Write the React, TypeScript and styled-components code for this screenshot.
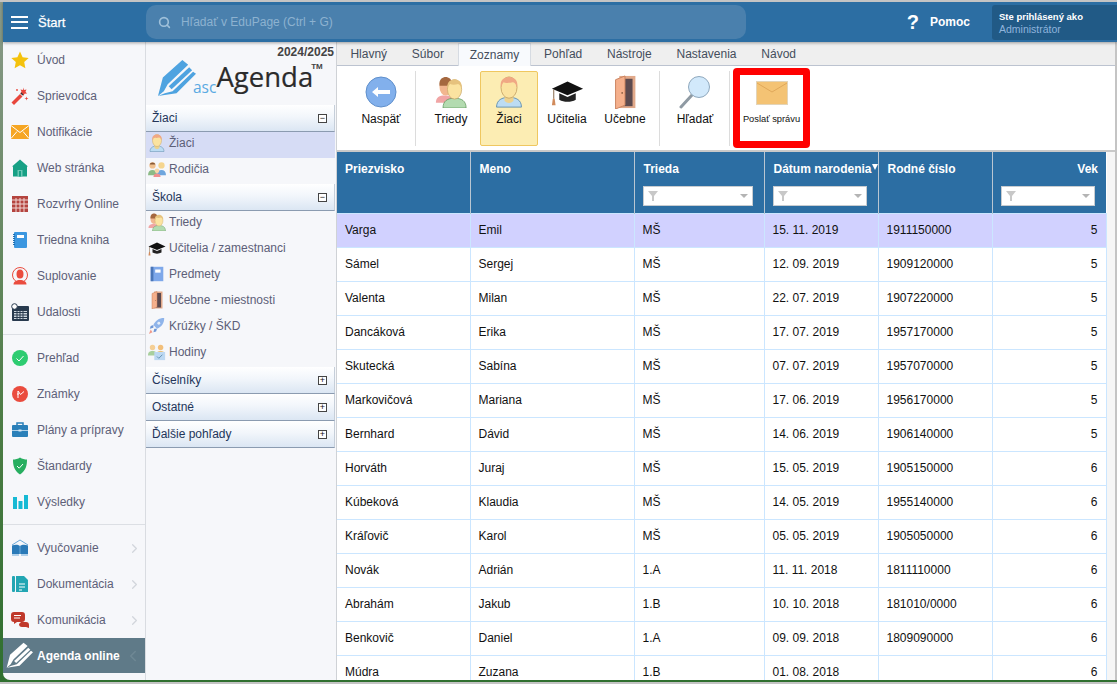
import React from "react";
import styled, { createGlobalStyle } from "styled-components";
import { ChevronLeft, ChevronRight, Search } from "lucide-react";

const GlobalStyle = createGlobalStyle`
  html, body { margin: 0; padding: 0; height: 100%; overflow: hidden; }
  body { font-family: "Liberation Sans", Arial, sans-serif; font-size: 12px; }
  * { box-sizing: border-box; }
`;

const Frame = styled.div`
  width: 1117px;
  height: 684px;
  display: flex;
  flex-direction: column;
  overflow: hidden;
  border-top: 2px solid #c4c4c4;
  border-bottom: 2px solid #c4c4c4;
  padding: 0 0 2px 3px;
  background: linear-gradient(180deg, #8a9a8a 0%, #4e7d46 60%, #2f6f2f 100%);
`;
const TopBar = styled.header`
  height: 40px;
  flex: none;
  display: flex;
  align-items: center;
  background: #2c6ea3;
  color: #fff;
  box-shadow: 0 1px 3px rgba(0, 0, 0, 0.35);
  position: relative;
  z-index: 2;
`;
const StartArea = styled.div`
  width: 143px;
  flex: none;
  display: flex;
  align-items: center;
  padding-left: 8px;
  gap: 10px;
`;
const Burger = styled.div`
  width: 17px;
  height: 13px;
  display: flex;
  flex-direction: column;
  justify-content: space-between;
  & > span { height: 2px; background: #fff; display: block; }
`;
const StartLabel = styled.span`
  font-size: 13px;
  -webkit-text-stroke: 0.25px #fff;
`;
const SearchBox = styled.div`
  width: 600px;
  height: 34px;
  flex: none;
  border-radius: 10px;
  background: #4a80ad;
  color: #8db2d0;
  display: flex;
  align-items: center;
  padding-left: 12px;
  gap: 10px;
  font-size: 12px;
`;
const HelpArea = styled.div`
  margin-left: auto;
  display: flex;
  align-items: center;
  margin-right: 22px;
  gap: 11px;
  font-weight: 700;
`;
const HelpMark = styled.span`
  font-size: 20px;
  font-weight: 700;
`;
const UserBox = styled.div`
  width: 125px;
  height: 35px;
  flex: none;
  background: #215a86;
  border-radius: 3px 0 0 3px;
  padding: 5px 0 0 7px;
  line-height: 13px;
`;
const UserTop = styled.div`
  font-size: 9.5px;
  font-weight: 700;
  color: #fff;
`;
const UserName = styled.div`
  font-size: 10.5px;
  color: #8fb4dc;
`;
const Body = styled.div`
  flex: 1;
  min-height: 0;
  display: flex;
`;
const SideMenu = styled.nav`
  width: 143px;
  flex: none;
  background: #f6f7fa;
  border-right: 1px solid #d9dce1;
  border-bottom-left-radius: 7px;
  display: flex;
  flex-direction: column;
`;
const MenuItem = styled.div<{ $active?: boolean }>`
  height: ${(p) => (p.$active ? "35px" : "36px")};
  flex: none;
  display: flex;
  align-items: center;
  padding-left: ${(p) => (p.$active ? "3px" : "8px")};
  gap: ${(p) => (p.$active ? "4px" : "8px")};
  white-space: nowrap;
  color: ${(p) => (p.$active ? "#fff" : "#5d6078")};
  background: ${(p) => (p.$active ? "#5f7a88" : "transparent")};
  font-weight: ${(p) => (p.$active ? 700 : 400)};
  & > svg:first-child { flex: none; }
`;
const MenuChevron = styled.span`
  margin-left: auto;
  margin-right: 3px;
  display: flex;
  color: #d2d6dc;
`;
const CollapseChevron = styled.span`
  margin-left: auto;
  margin-right: 7px;
  display: flex;
  color: #6f8894;
`;
const MenuRule = styled.div<{ $gap: number }>`
  height: 1px;
  flex: none;
  background: #dcdfe4;
  margin: 4px 0 ${(p) => p.$gap}px;
`;
const AgendaPanel = styled.aside`
  width: 190px;
  flex: none;
  background: #f6f7fa;
  display: flex;
  flex-direction: column;
`;
const YearLabel = styled.div`
  height: 14px;
  margin-top: 3px;
  padding-right: 2px;
  text-align: right;
  font-weight: 700;
  color: #444;
  line-height: 14px;
`;
const LogoRow = styled.div`
  height: 46px;
  padding-left: 11px;
  display: flex;
  align-items: flex-start;
`;
const LogoAsc = styled.span`
  font-family: "Open Sans", sans-serif;
  font-size: 15.5px;
  color: #5aaae2;
  margin: 18px 0 0 -3px;
  line-height: 20px;
`;
const LogoWord = styled.span`
  font-family: "Open Sans", sans-serif;
  font-size: 27.5px;
  color: #2b2b2b;
  line-height: 36px;
  -webkit-text-stroke: 0.2px #2b2b2b;
`;
const LogoTm = styled.span`
  font-size: 8px;
  font-weight: 700;
  color: #444;
  margin: 3px 0 0 -2px;
`;
const SectionHead = styled.div`
  height: 27px;
  width: 189px;
  flex: none;
  display: flex;
  align-items: center;
  justify-content: space-between;
  padding: 0 7px 0 6px;
  color: #23355a;
  background: linear-gradient(180deg, #ffffff 0%, #f2f6fb 45%, #dbe6f3 100%);
  border-bottom: 1px solid #8b9bb0;
  border-right: 1px solid #c5ced9;
`;
const Toggle = styled.span`
  width: 9px;
  height: 9px;
  border: 1px solid #444;
  background: #fff;
  font-size: 9px;
  line-height: 7px;
  text-align: center;
  color: #111;
`;
const PanelItem = styled.div<{ $active?: boolean }>`
  height: 26px;
  width: 189px;
  flex: none;
  display: flex;
  align-items: center;
  padding: 0 0 5px 2px;
  gap: 3px;
  color: #5d6078;
  background: ${(p) => (p.$active ? "#d6dcf5" : "transparent")};
  & > svg { flex: none; width: 18px; height: 18px; }
`;
const Main = styled.main`
  flex: 1;
  min-width: 0;
  display: flex;
  flex-direction: column;
  background: #f6f6f6;
  border-left: 1px solid #cfd2d6;
  border-right: 2px solid #c4c4c4;
`;
const TabBar = styled.div`
  height: 24px;
  flex: none;
  display: flex;
  padding: 1px 0 0 1px;
  background: #efefef;
  border-bottom: 1px solid #bcc3d0;
`;
const Tab = styled.div<{ $active?: boolean }>`
  height: ${(p) => (p.$active ? "23px" : "22px")};
  display: flex;
  align-items: center;
  padding: 0 ${(p) => (p.$active ? "11px" : "12.4px")};
  margin: 0 ${(p) => (p.$active ? "0.5px 0 1.5px" : "0")};
  color: #444d5c;
  background: ${(p) => (p.$active ? "#f8fafd" : "transparent")};
  border: ${(p) => (p.$active ? "1px solid #d6dbe2" : "none")};
  border-bottom: none;
`;
const Ribbon = styled.div`
  height: 86px;
  flex: none;
  display: flex;
  align-items: center;
  padding-left: 10px;
  background: #fff;
  border-bottom: 2px solid #c9c9c9;
`;
const RibbonButton = styled.div<{ $active?: boolean; $wide?: boolean }>`
  width: ${(p) => (p.$wide ? "68px" : "58px")};
  height: 75px;
  flex: none;
  display: flex;
  flex-direction: column;
  align-items: center;
  padding-top: 2px;
  gap: 2px;
  color: #111;
  background: ${(p) => (p.$active ? "#fcedb3" : "transparent")};
  border: 1px solid ${(p) => (p.$active ? "#efc760" : "transparent")};
  border-radius: 2px;
`;
const RibbonIcon = styled.div`
  height: 36px;
  display: flex;
  align-items: center;
  justify-content: center;
`;
const RibbonRule = styled.div<{ $left: number; $right: number }>`
  width: 1px;
  height: 75px;
  flex: none;
  background: #dcdcdc;
  margin: 0 ${(p) => p.$right}px 0 ${(p) => p.$left}px;
`;
const SendBox = styled.div`
  width: 77px;
  height: 80px;
  flex: none;
  display: flex;
  flex-direction: column;
  align-items: center;
  padding-top: 6px;
  gap: 9px;
  border: 7px solid #f00;
  border-radius: 4px;
  margin-left: -1px;
  color: #111;
  font-size: 9.3px;
`;
const TableArea = styled.div`
  flex: 1;
  min-height: 0;
  overflow: hidden;
`;
const Grid = styled.table`
  width: 769px;
  table-layout: fixed;
  border-collapse: collapse;
  background: #fff;
`;
const HeadCell = styled.th<{ $right?: boolean }>`
  height: 61px;
  padding: 0 8px;
  vertical-align: top;
  font-size: 12px;
  font-weight: 700;
  color: #fff;
  text-align: ${(p) => (p.$right ? "right" : "left")};
  background: #2c6ea3;
  border-left: 1px solid #b9c6d2;
  white-space: nowrap;
  &:first-child { border-left: none; }
  &:not(:first-child) > div:first-child { padding-left: 1px; }
`;
const HeadLabel = styled.div`
  height: 34px;
  padding-top: 10px;
`;
const SortMark = styled.span`
  display: inline-block;
  width: 0;
  height: 0;
  margin: 0 -8px 3px 0;
  border-left: 3.5px solid transparent;
  border-right: 3.5px solid transparent;
  border-top: 6px solid #fff;
`;
const FilterBox = styled.div`
  height: 20px;
  margin-right: 3px;
  background: #fff;
  border: 1px solid #c8ccd0;
  display: flex;
  align-items: center;
  justify-content: space-between;
  padding: 0 4px;
`;
const FilterArrow = styled.span`
  width: 0;
  height: 0;
  border-left: 4px solid transparent;
  border-right: 4px solid transparent;
  border-top: 4px solid #b4b4b4;
`;
const Row = styled.tr<{ $selected?: boolean }>`
  height: 34px;
  background: ${(p) => (p.$selected ? "#d1d1ff" : "#fff")};
`;
const Cell = styled.td<{ $right?: boolean }>`
  padding: 0 8px;
  font-size: 12px;
  color: #111;
  text-align: ${(p) => (p.$right ? "right" : "left")};
  border: 1px solid #cbe6ff;
  &:first-child { border-left: none; }
`;

type IconProps = { size?: number };

const Star = () => (
  <svg width="18" height="18" viewBox="0 0 18 18"><path d="M9 0.5l2.600 5.700 6.100.7-4.500 4.200 1.200 6.100L9 14.200l-5.400 3 1.200-6.100L.3 6.900l6.100-.7z" fill="#f4c20d" /></svg>
);
const Wand = () => (
  <svg width="18" height="18" viewBox="0 0 18 18"><path d="M0.500 15.500L9 7l2.500 2.500L3 18z" fill="#e8463c" /><path d="M12 .5l1 2.500 2.500-.5-1 2.300 1.500 1.700-2.500.2-1 2.300-1-2.300-2.500-.2 1.500-1.700-1-2.300 2.500.5z" fill="#e8463c" /><path d="M9.500 6.500l1-1 2 2-1 1z" fill="#333" /><path d="M15.500 9.500l.5 1.500 1.500.5-1.500.5-.5 1.500-.5-1.500-1.500-.5 1.500-.5z" fill="#e8463c" /><circle cx="6" cy="3" r=".9" fill="#e8463c" /></svg>
);
const MailOrange = () => (
  <svg width="18" height="14" viewBox="0 0 18 14"><rect width="18" height="14" fill="#f6a623" /><path d="M0 .5l9 7 9-7M0 13.500l6-7M18 13.500l-6-7" stroke="#fff" strokeWidth="1" fill="none" /></svg>
);
const House = () => (
  <svg width="18" height="18" viewBox="0 0 18 18"><path d="M9 .5l8 7h-1V17.500H2V7.500H1z" fill="#17a085" /><rect x="6.500" y="11" width="5" height="6.500" fill="#6cc8b6" /><rect x="8" y="12" width="2" height="5.500" fill="#17a085" /></svg>
);
const Calendar = () => (
  <svg width="18" height="18" viewBox="0 0 18 18"><rect x="1" y="1" width="16" height="16" fill="#b4443f" />{[4, 8, 12].map((y) => <path key={y} d={`M1 ${y + 1}h16`} stroke="#f0d6d4" strokeWidth="1" />)}{[5, 9, 13].map((x) => <path key={x} d={`M${x} 3v14`} stroke="#f0d6d4" strokeWidth="1" />)}</svg>
);
const Notebook = () => (
  <svg width="18" height="18" viewBox="0 0 18 18"><rect x="3" y="1" width="13" height="16" rx="1" fill="#3b97e0" /><rect x="6" y="4" width="7" height="3" fill="#fff" /><path d="M3 3v12" stroke="#1e6fb0" strokeWidth="2" strokeDasharray="1 1" /></svg>
);
const Substitute = () => (
  <svg width="18" height="18" viewBox="0 0 18 18"><circle cx="9" cy="8" r="7.500" fill="none" stroke="#ea4c3e" strokeWidth="1" /><ellipse cx="9" cy="7" rx="3.500" ry="4.500" fill="#ea4c3e" /><path d="M2.500 17.500c0-3 3-4.500 6.500-4.500s6.500 1.500 6.500 4.500z" fill="#ea4c3e" /></svg>
);
const Events = () => (
  <svg width="18" height="18" viewBox="0 0 18 18"><rect x="1" y="3" width="17" height="15" rx="1" fill="#283a4e" /><rect x="3" y="8" width="13" height="8" fill="#cdd6de" />{[9.500, 12, 14.500].map((y) => <path key={y} d={`M3 ${y}h13`} stroke="#283a4e" strokeWidth="1" />)}{[6, 9, 12].map((x) => <path key={x} d={`M${x} 8v8`} stroke="#283a4e" strokeWidth="1" />)}<circle cx="3.500" cy="3.500" r="2.800" fill="#fff" stroke="#283a4e" strokeWidth="1" /></svg>
);
const CheckCircle = () => (
  <svg width="18" height="18" viewBox="0 0 18 18"><circle cx="9" cy="9" r="8" fill="#2ecc71" /><path d="M5.500 9.500l2.500 2.500 4.500-5" stroke="#fff" strokeWidth="1" fill="none" /></svg>
);
const Grades = () => (
  <svg width="18" height="18" viewBox="0 0 18 18"><circle cx="9" cy="9" r="8" fill="#ea4c3e" /><path d="M7 13V6l2.500 3.500L13 6.500M6 9h2" stroke="#fff" strokeWidth="1" fill="none" /></svg>
);
const Briefcase = () => (
  <svg width="18" height="18" viewBox="0 0 18 18"><path d="M6 4V2h6v2" stroke="#2a80b9" strokeWidth="1.500" fill="none" /><rect x="1" y="4" width="16" height="12" rx="1" fill="#2a80b9" /><path d="M1 9.500h16" stroke="#d5e8f5" strokeWidth=".8" /><rect x="7.500" y="8.500" width="3" height="2" fill="#d5e8f5" /></svg>
);
const Shield = () => (
  <svg width="18" height="18" viewBox="0 0 18 18"><path d="M9 .5c2 1.500 5 2 7 2 0 6-1 11-7 15C3 13.500 2 8.500 2 2.500c2 0 5-.5 7-2z" fill="#27ae60" /><path d="M6 9l2.200 2.200L12 7" stroke="#fff" strokeWidth="1" fill="none" /></svg>
);
const Bars = () => (
  <svg width="18" height="18" viewBox="0 0 18 18"><rect x="2" y="4" width="4" height="12" fill="#16b9d4" /><rect x="7.500" y="8" width="4" height="8" fill="#16b9d4" /><rect x="13" y="2" width="4" height="14" fill="#16b9d4" /></svg>
);
const OpenBook = () => (
  <svg width="18" height="18" viewBox="0 0 18 18"><path d="M1 6l8-5 8 5" stroke="#6aa8d8" strokeWidth="1" fill="none" /><path d="M1 6.500c3-1 6-1 8 .5 2-1.500 5-1.500 8-.5V15H1z" fill="#2a7ab8" /><path d="M9 7v8M1 16h7M10 16h7" stroke="#6aa8d8" strokeWidth="1" /></svg>
);
const Documents = () => (
  <svg width="18" height="18" viewBox="0 0 18 18"><rect x="1" y="1" width="3" height="16" rx="1" fill="#22a6b3" /><path d="M5 1h8l4 4v12H5z" fill="#22a6b3" /><path d="M8 9h6M8 12h6M8 15h3" stroke="#fff" strokeWidth="1" /></svg>
);
const Chat = () => (
  <svg width="18" height="18" viewBox="0 0 18 18"><path d="M3 1h8a3 3 0 0 1 3 3v4a3 3 0 0 1-3 3H6l-3 2V11a3 3 0 0 1-3-3V4a3 3 0 0 1 3-3z" fill="#c0392b" /><path d="M3 4.500h7M3 7h6" stroke="#fff" strokeWidth="1" /><path d="M10 11h5a3 3 0 0 1 3 3v3l-3-1h-4a3 3 0 0 1-3-3z" fill="#c0392b" /></svg>
);
const Pencil = ({ size = 27, color = "#fff" }: IconProps & { color?: string }) => (
  <svg width={size} height={size} viewBox="0 0 40 40" fill={color}>
    <path d="M1 38L6 19 26 1 32 6 11 26 7 33z" />
    <path d="M12 28L33 8.500l3 3L15 31z" />
    <path d="M1 38l7-3 8-2L37 13l3 2L20 35z" />
  </svg>
);
const Person = ({ size = 18 }: IconProps) => (
  <svg width={size} height={size} viewBox="0 0 36 36">
    <path d="M4 35c0-8 6-11 14-11s14 3 14 11z" fill="#bcdcf3" stroke="#5d8cad" strokeWidth="1" />
    <path d="M13 22h10v6c-3 3-7 3-10 0z" fill="#ecd28f" />
    <ellipse cx="18" cy="13" rx="9" ry="12" fill="#fbe3a0" stroke="#c8a668" strokeWidth="1" />
    <path d="M9 13C7 4 13 1 18 1s11 3 9 12c-1-4-3-6-5-6-3 1-9 1-10 0-1 1-2 3-3 6z" fill="#f0a884" />
  </svg>
);
const Pair = ({ size = 20 }: IconProps) => (
  <svg width={size} height={size} viewBox="0 0 36 36">
    <path d="M1 30c0-6 4-8 10-8s10 2 10 8z" fill="#f1a5a5" />
    <ellipse cx="12" cy="12" rx="7" ry="10" fill="#f2b68f" />
    <path d="M5 11C4 3 9 1 12 1s8 2 7 10z" fill="#a5683f" />
    <path d="M9 36c0-8 5-11 13-11s13 3 13 11z" fill="#b3dbb0" stroke="#5c9358" strokeWidth=".8" />
    <ellipse cx="22" cy="15" rx="8" ry="11" fill="#fbe3a0" stroke="#c8a668" strokeWidth=".8" />
    <path d="M14 14c-1-8 4-10 8-10s9 2 8 10c-1-3-2-4-4-5-3 1-7 1-9 0-1 1-2 2-3 5z" fill="#e6c27d" />
  </svg>
);
const Parents = () => (
  <svg width="20" height="20" viewBox="0 0 20 20">
    <path d="M0 17c0-4 2-6 5-6s5 2 5 6z" fill="#8cba86" />
    <circle cx="5" cy="6" r="3.500" fill="#f0c08e" />
    <path d="M2 5c0-3 6-3 6 0z" fill="#8a5a36" />
    <path d="M10 17c0-4 2-6 5-6s5 2 5 6z" fill="#6ea5dd" />
    <circle cx="15" cy="6" r="3.500" fill="#f5d58e" />
    <path d="M6 19c0-3 2-4 4-4s4 1 4 4z" fill="#ef8f8f" />
    <circle cx="10" cy="12" r="2.500" fill="#f7d6a6" />
  </svg>
);
const Cap = ({ size = 20 }: IconProps) => (
  <svg width={size} height={size} viewBox="0 0 36 36">
    <path d="M18 7L1 15l17 7 17-7z" fill="#111" />
    <path d="M9 20v7c5 3 13 3 18 0v-7l-9 4z" fill="#222" />
    <path d="M3 16v10" stroke="#7a5a3a" strokeWidth="1" />
    <path d="M2 26h2l1 7H1z" fill="#d18b5c" />
  </svg>
);
const Book = () => (
  <svg width="18" height="20" viewBox="0 0 18 20"><rect x="2" y="2" width="14" height="16" fill="#7ea8ea" /><rect x="2" y="2" width="3" height="16" fill="#4a76b8" /><rect x="7" y="5" width="6" height="3.500" fill="#fff" /></svg>
);
const Door = ({ size = 20 }: IconProps) => (
  <svg width={size} height={size} viewBox="0 0 24 36">
    <rect x="6" y="1" width="17" height="34" fill="#e1a98a" />
    <rect x="10" y="4" width="10" height="29" fill="#5c4a4f" />
    <path d="M2 5l10-4v31l-10 4z" fill="#f5b08c" stroke="#c9825f" strokeWidth="1" />
    <circle cx="9" cy="19" r=".9" fill="#8a5a3e" />
  </svg>
);
const Rocket = () => (
  <svg width="20" height="20" viewBox="0 0 20 20"><path d="M18 1c-6 0-10 3-12 8l4 4c5-2 8-6 8-12z" fill="#8fb4ea" /><circle cx="12" cy="7" r="1.600" fill="#e4eefb" /><path d="M6 9l-3 1-1 3 4-1zM10 13l-1 3-3 1 1-4z" fill="#6f97d6" /><path d="M3 14l-2 5 4-2z" fill="#ef9a8a" /></svg>
);
const Lessons = () => (
  <svg width="20" height="20" viewBox="0 0 20 20">
    <circle cx="5" cy="5" r="3" fill="#f5cf95" /><circle cx="14" cy="5" r="3" fill="#f2bf7a" />
    <path d="M0 14c0-4 2-5 5-5s5 1 5 5z" fill="#a8cf9d" /><path d="M9 14c0-4 2-5 5-5s5 1 5 5z" fill="#e6c27d" />
    <rect x="7" y="10" width="12" height="9" fill="#bcd8f2" /><path d="M10 15l2 2 4-4" stroke="#5d8cad" strokeWidth="1" fill="none" />
  </svg>
);
const BackArrow = () => (
  <svg width="32" height="32" viewBox="0 0 32 32"><circle cx="16" cy="16" r="15" fill="#82b0ec" stroke="#5f8fcb" strokeWidth="1" /><path d="M7 16l6-5v3h12v4H13v3z" fill="#fff" /></svg>
);
const Lens = () => (
  <svg width="32" height="34" viewBox="0 0 32 34"><path d="M2 32l11-12" stroke="#8f9aa3" strokeWidth="3" strokeLinecap="round" /><circle cx="20" cy="12" r="10.500" fill="#d2e9fb" stroke="#8fa8bd" strokeWidth="1" /></svg>
);
const Envelope = () => (
  <svg width="32" height="24" viewBox="0 0 32 24"><rect x=".5" y=".5" width="31" height="23" fill="#f4c374" stroke="#e3d4b8" strokeWidth="1" /><path d="M1 2l15 9 15-9" stroke="#e0a85a" strokeWidth="1" fill="none" /></svg>
);
const Funnel = () => (
  <svg width="10" height="10" viewBox="0 0 10 10"><path d="M0 0h10L6 5v5H4V5z" fill="#c8c8c8" /></svg>
);

const menuTop = [
  { label: "Úvod", icon: <Star /> },
  { label: "Sprievodca", icon: <Wand /> },
  { label: "Notifikácie", icon: <MailOrange /> },
  { label: "Web stránka", icon: <House /> },
  { label: "Rozvrhy Online", icon: <Calendar /> },
  { label: "Triedna kniha", icon: <Notebook /> },
  { label: "Suplovanie", icon: <Substitute /> },
  { label: "Udalosti", icon: <Events /> },
];
const menuMiddle = [
  { label: "Prehľad", icon: <CheckCircle /> },
  { label: "Známky", icon: <Grades /> },
  { label: "Plány a prípravy", icon: <Briefcase /> },
  { label: "Štandardy", icon: <Shield /> },
  { label: "Výsledky", icon: <Bars /> },
];
const menuBottom = [
  { label: "Vyučovanie", icon: <OpenBook /> },
  { label: "Dokumentácia", icon: <Documents /> },
  { label: "Komunikácia", icon: <Chat /> },
];
const schoolItems = [
  { label: "Triedy", icon: <Pair /> },
  { label: "Učitelia / zamestnanci", icon: <Cap /> },
  { label: "Predmety", icon: <Book /> },
  { label: "Učebne - miestnosti", icon: <Door /> },
  { label: "Krúžky / ŠKD", icon: <Rocket /> },
  { label: "Hodiny", icon: <Lessons /> },
];
const tabs = ["Hlavný", "Súbor", "Zoznamy", "Pohľad", "Nástroje", "Nastavenia", "Návod"];
const columns = [
  { label: "Priezvisko", width: 133 },
  { label: "Meno", width: 164 },
  { label: "Trieda", width: 130, filter: true },
  { label: "Dátum narodenia", width: 114, filter: true, sorted: true },
  { label: "Rodné číslo", width: 114 },
  { label: "Vek", width: 114, filter: true, right: true },
];
const students = [
  ["Varga", "Emil", "MŠ", "15. 11. 2019", "1911150000", "5"],
  ["Sámel", "Sergej", "MŠ", "12. 09. 2019", "1909120000", "5"],
  ["Valenta", "Milan", "MŠ", "22. 07. 2019", "1907220000", "5"],
  ["Dancáková", "Erika", "MŠ", "17. 07. 2019", "1957170000", "5"],
  ["Skutecká", "Sabína", "MŠ", "07. 07. 2019", "1957070000", "5"],
  ["Markovičová", "Mariana", "MŠ", "17. 06. 2019", "1956170000", "5"],
  ["Bernhard", "Dávid", "MŠ", "14. 06. 2019", "1906140000", "5"],
  ["Horváth", "Juraj", "MŠ", "15. 05. 2019", "1905150000", "6"],
  ["Kúbeková", "Klaudia", "MŠ", "14. 05. 2019", "1955140000", "6"],
  ["Kráľovič", "Karol", "MŠ", "05. 05. 2019", "1905050000", "6"],
  ["Novák", "Adrián", "1.A", "11. 11. 2018", "1811110000", "6"],
  ["Abrahám", "Jakub", "1.B", "10. 10. 2018", "181010/0000", "6"],
  ["Benkovič", "Daniel", "1.A", "09. 09. 2018", "1809090000", "6"],
  ["Múdra", "Zuzana", "1.B", "01. 08. 2018", "", "6"],
];

const App: React.FC = () => {
  return (
    <Frame>
      <GlobalStyle />
      <TopBar>
        <StartArea>
          <Burger><span /><span /><span /></Burger>
          <StartLabel>Štart</StartLabel>
        </StartArea>
        <SearchBox>
          <Search size={13} color="#9fc0da" strokeWidth={3} />
          Hľadať v EduPage (Ctrl + G)
        </SearchBox>
        <HelpArea>
          <HelpMark>?</HelpMark>
          Pomoc
        </HelpArea>
        <UserBox>
          <UserTop>Ste prihlásený ako</UserTop>
          <UserName>Administrátor</UserName>
        </UserBox>
      </TopBar>
      <Body>
        <SideMenu>
          {menuTop.map((m) => <MenuItem key={m.label}>{m.icon}{m.label}</MenuItem>)}
          <MenuRule $gap={5} />
          {menuMiddle.map((m) => <MenuItem key={m.label}>{m.icon}{m.label}</MenuItem>)}
          <MenuRule $gap={5} />
          {menuBottom.map((m) => (
            <MenuItem key={m.label}>
              {m.icon}{m.label}
              <MenuChevron><ChevronRight size={15} /></MenuChevron>
            </MenuItem>
          ))}
          <MenuItem $active>
            <Pencil size={27} />
            Agenda online
            <CollapseChevron><ChevronLeft size={18} /></CollapseChevron>
          </MenuItem>
        </SideMenu>
        <AgendaPanel>
          <YearLabel>2024/2025</YearLabel>
          <LogoRow>
            <Pencil size={39} color="#4ea3e0" />
            <LogoAsc>asc</LogoAsc>
            <LogoWord>Agenda</LogoWord>
            <LogoTm>TM</LogoTm>
          </LogoRow>
          <SectionHead>Žiaci<Toggle>−</Toggle></SectionHead>
          <PanelItem $active><Person />Žiaci</PanelItem>
          <PanelItem><Parents />Rodičia</PanelItem>
          <SectionHead>Škola<Toggle>−</Toggle></SectionHead>
          {schoolItems.map((s) => <PanelItem key={s.label}>{s.icon}{s.label}</PanelItem>)}
          <SectionHead>Číselníky<Toggle>+</Toggle></SectionHead>
          <SectionHead>Ostatné<Toggle>+</Toggle></SectionHead>
          <SectionHead>Ďalšie pohľady<Toggle>+</Toggle></SectionHead>
        </AgendaPanel>
        <Main>
          <TabBar>
            {tabs.map((t) => <Tab key={t} $active={t === "Zoznamy"}>{t}</Tab>)}
          </TabBar>
          <Ribbon>
            <RibbonButton $wide><RibbonIcon><BackArrow /></RibbonIcon>Naspäť</RibbonButton>
            <RibbonRule $left={0} $right={6} />
            <RibbonButton><RibbonIcon><Pair size={32} /></RibbonIcon>Triedy</RibbonButton>
            <RibbonButton $active><RibbonIcon><Person size={32} /></RibbonIcon>Žiaci</RibbonButton>
            <RibbonButton><RibbonIcon><Cap size={33} /></RibbonIcon>Učitelia</RibbonButton>
            <RibbonButton><RibbonIcon><Door size={34} /></RibbonIcon>Učebne</RibbonButton>
            <RibbonRule $left={5} $right={6} />
            <RibbonButton><RibbonIcon><Lens /></RibbonIcon>Hľadať</RibbonButton>
            <RibbonRule $left={5} $right={4} />
            <SendBox><Envelope />Poslať správu</SendBox>
          </Ribbon>
          <TableArea>
            <Grid>
              <colgroup>
                {columns.map((c) => <col key={c.label} width={c.width} />)}
              </colgroup>
              <thead>
                <tr>
                  {columns.map((c) => (
                    <HeadCell key={c.label} $right={c.right}>
                      <HeadLabel>
                        {c.label}
                        {c.sorted && <SortMark />}
                      </HeadLabel>
                      {c.filter && <FilterBox><Funnel /><FilterArrow /></FilterBox>}
                    </HeadCell>
                  ))}
                </tr>
              </thead>
              <tbody>
                {students.map((s, i) => (
                  <Row key={s[0]} $selected={i === 0}>
                    {s.map((v, j) => <Cell key={j} $right={j === 5}>{v}</Cell>)}
                  </Row>
                ))}
              </tbody>
            </Grid>
          </TableArea>
        </Main>
      </Body>
    </Frame>
  );
};

export default App;
